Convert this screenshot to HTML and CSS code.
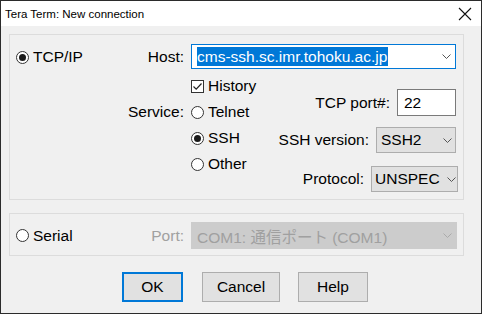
FILE: index.html
```html
<!DOCTYPE html>
<html lang="ja">
<head>
    <meta charset="UTF-8">
    <title>Tera Term: New connection</title>
    <link rel="stylesheet" href="styles.css">
</head>
<body>
    <div class="window">
        <div class="titlebar">
            <span class="title">Tera Term: New connection</span>
            <svg class="close" width="14" height="14" viewBox="0 0 14 14">
                <path d="M1 1 L13 13 M13 1 L1 13" stroke="#111" stroke-width="1.1" fill="none"/>
            </svg>
        </div>

        <div class="content">
            <div class="group tcp">
                <div class="opt mode"><span class="radio on"></span>TCP/IP</div>

                <div class="lbl host-lbl">Host:</div>
                <div class="combo host">
                    <span class="sel">cms-ssh.sc.imr.tohoku.ac.jp</span>
                    <svg class="chev" width="9" height="5" viewBox="0 0 9 5"><path d="M0.5 0.5 L4.5 4.5 L8.5 0.5" stroke="#555" fill="none"/></svg>
                </div>

                <div class="opt history">
                    <span class="check">
                        <svg width="11" height="11" viewBox="0 0 11 11"><path d="M1.5 5.5 L4.2 8.2 L9.5 2.5" stroke="#222" stroke-width="1.2" fill="none"/></svg>
                    </span>History
                </div>

                <div class="lbl service-lbl">Service:</div>
                <div class="opt telnet"><span class="radio"></span>Telnet</div>
                <div class="opt ssh"><span class="radio on"></span>SSH</div>
                <div class="opt other"><span class="radio"></span>Other</div>

                <div class="ssh-opts">
                    <div class="field port">
                        <span>TCP port#:</span>
                        <div class="edit">22</div>
                    </div>
                    <div class="field version">
                        <span>SSH version:</span>
                        <div class="drop">SSH2
                            <svg class="chev" width="9" height="5" viewBox="0 0 9 5"><path d="M0.5 0.5 L4.5 4.5 L8.5 0.5" stroke="#555" fill="none"/></svg>
                        </div>
                    </div>
                    <div class="field proto">
                        <span>Protocol:</span>
                        <div class="drop">UNSPEC
                            <svg class="chev" width="9" height="5" viewBox="0 0 9 5"><path d="M0.5 0.5 L4.5 4.5 L8.5 0.5" stroke="#555" fill="none"/></svg>
                        </div>
                    </div>
                </div>
            </div>

            <div class="group serial">
                <div class="opt mode"><span class="radio"></span>Serial</div>
                <div class="lbl disabled">Port:</div>
                <div class="combo off">
                    <span>COM1: 通信ポート (COM1)</span>
                    <svg class="chev" width="9" height="5" viewBox="0 0 9 5"><path d="M0.5 0.5 L4.5 4.5 L8.5 0.5" stroke="#aaa" fill="none"/></svg>
                </div>
            </div>

            <div class="buttons">
                <button class="btn ok">OK</button>
                <button class="btn cancel">Cancel</button>
                <button class="btn help">Help</button>
            </div>
        </div>
    </div>
</body>
</html>
```

FILE: styles.css
```css
body {
    margin: 0;
    font-family: "Liberation Sans", Arial, "Noto Sans CJK JP", sans-serif;
    font-size: 15.5px;
    color: #000;
}
.window {
    width: 482px;
    height: 314px;
    box-sizing: border-box;
    border: 1px solid #2b2b2b;
    background-color: #f0f0f0;
}
.titlebar {
    height: 25px;
    background-color: #fff;
    display: flex;
    align-items: center;
    justify-content: space-between;
    padding: 0 9px 0 4px;
}
.title {
    font-size: 11.5px;
}
.content {
    padding: 8px 0 0 8px;
}
.group {
    width: 455px;
    box-sizing: border-box;
    border: 1px solid #dcdcdc;
    display: grid;
    grid-template-columns: 110px 71px 84px 181px;
}
.tcp {
    grid-template-rows: 29px 26px 26px 26px auto;
    padding: 9px 7px 7px 0;
}
.serial {
    margin-top: 13px;
    padding: 8px 6px 6px 0;
}
.opt {
    display: flex;
    align-items: center;
    gap: 4px;
    height: 26px;
    white-space: nowrap;
}
.mode {
    grid-column: 1;
    grid-row: 1;
    padding-left: 6px;
}
.serial .mode {
    align-self: center;
}
.lbl {
    grid-column: 2;
    text-align: right;
    padding-right: 7px;
    align-self: center;
}
.host-lbl { grid-row: 1; align-self: start; line-height: 25px; }
.service-lbl { grid-row: 3; }
.history { grid-column: 3; grid-row: 2; }
.telnet { grid-column: 3; grid-row: 3; }
.ssh { grid-column: 3; grid-row: 4; }
.other { grid-column: 3; grid-row: 5; align-self: start; }
.disabled {
    color: #a0a0a0;
}
.radio {
    width: 13px;
    height: 13px;
    box-sizing: border-box;
    border: 1px solid #333;
    border-radius: 50%;
    background-color: #fff;
    display: flex;
    align-items: center;
    justify-content: center;
    flex-shrink: 0;
}
.radio.on::after {
    content: "";
    width: 7px;
    height: 7px;
    border-radius: 50%;
    background-color: #1a1a1a;
}
.check {
    width: 13px;
    height: 13px;
    box-sizing: border-box;
    border: 1px solid #333;
    background-color: #fff;
    display: flex;
    flex-shrink: 0;
}
.combo {
    grid-column: 3 / 5;
    grid-row: 1;
    height: 25px;
    box-sizing: border-box;
    display: flex;
    align-items: center;
    justify-content: space-between;
    padding: 0 4px 0 5px;
    white-space: nowrap;
}
.host {
    border: 1px solid #0078d7;
    background-color: #fff;
}
.sel {
    background-color: #0078d7;
    color: #fff;
    line-height: 19px;
    padding-right: 1px;
}
.off {
    height: 27px;
    background-color: #cccccc;
    border: 1px solid #cccccc;
    color: #a0a0a0;
    margin-right: -1px;
}
.ssh-opts {
    grid-column: 4;
    grid-row: 2 / 6;
    display: flex;
    flex-direction: column;
    align-items: flex-end;
    padding-top: 16px;
}
.field {
    display: flex;
    align-items: center;
    gap: 7px;
    white-space: nowrap;
}
.version { margin-top: 11px; }
.proto { margin-top: 13px; margin-right: -2px; }
.edit {
    width: 59px;
    height: 27px;
    box-sizing: border-box;
    border: 1px solid #7a7a7a;
    background-color: #fff;
    padding-left: 6px;
    line-height: 25px;
}
.drop {
    height: 26px;
    box-sizing: border-box;
    border: 1px solid #adadad;
    background-color: #e1e1e1;
    display: flex;
    align-items: center;
    justify-content: space-between;
    padding: 0 3px 0 4px;
}
.version .drop { width: 80px; }
.proto .drop { width: 87px; padding-left: 3px; padding-right: 1px; }
.buttons {
    display: flex;
    gap: 18px;
    margin-top: 16px;
    padding-left: 113px;
}
.btn {
    height: 30px;
    font-family: inherit;
    font-size: 15.5px;
    background-color: #e1e1e1;
    border: 1px solid #adadad;
    color: #000;
    padding: 0;
}
.ok {
    width: 61px;
    border: 2px solid #0078d7;
    margin-right: 1px;
}
.cancel { width: 78px; }
.help { width: 70px; }
```
